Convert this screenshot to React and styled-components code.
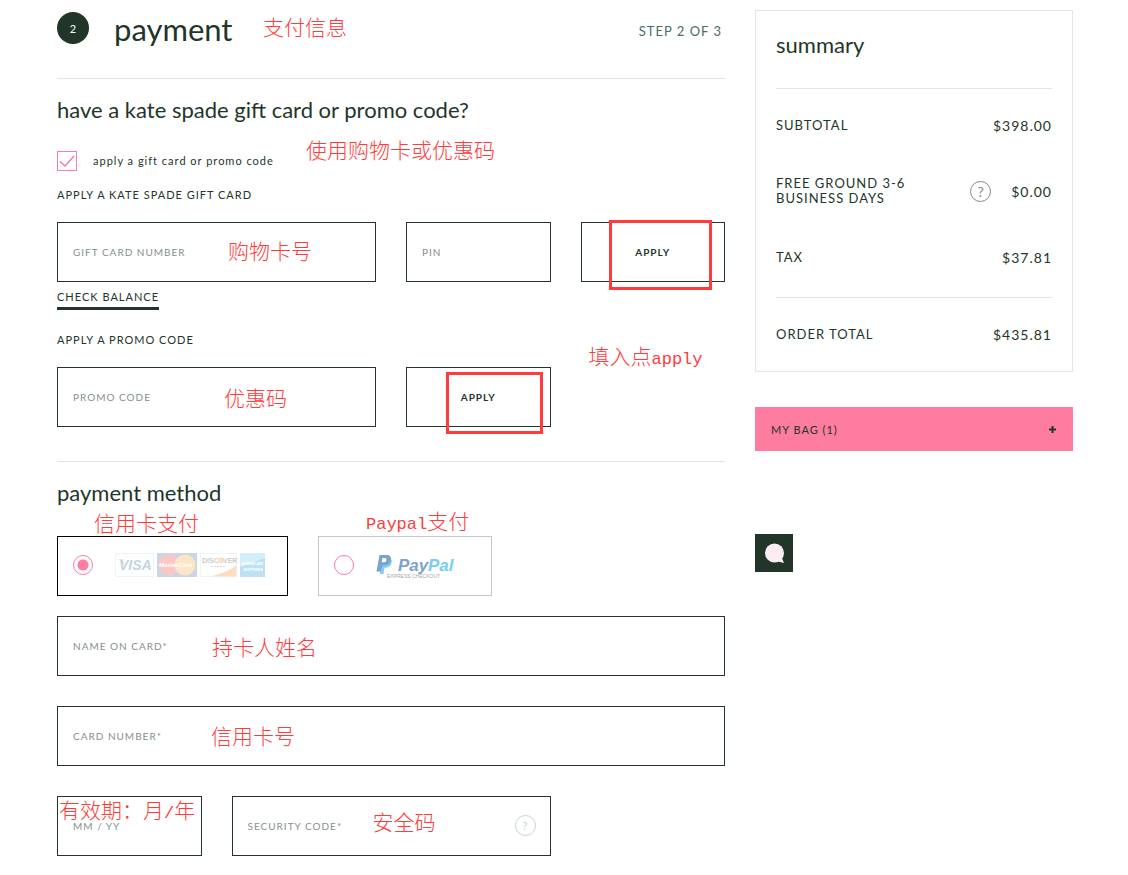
import { useState } from "react";
import styled, { createGlobalStyle } from "styled-components";

const dark = "#213629";
const pink = "#fd7c9f";
const line = "#dfe7e5";
const noteRed = "#ff3b3b";

const GlobalStyle = createGlobalStyle`
  * {
    box-sizing: border-box;
  }
  body {
    margin: 0;
    background-color: #ffffff;
    color: ${dark};
    font-family: Lato, "Noto Sans CJK SC", sans-serif;
  }
  h1, h2, h3, p, dl, dt, dd {
    margin: 0;
    font-weight: 400;
  }
  button, input {
    font-family: inherit;
    color: inherit;
  }
`;

const Page = styled.div`
  display: grid;
  grid-template-columns: 668fr 318fr;
  column-gap: 30px;
  align-items: start;
  padding: 10px 55px 19px 57px;
`;

const Main = styled.main`
  min-width: 0;
`;

const Side = styled.aside`
  min-width: 0;
`;

const Header = styled.header`
  position: relative;
  display: flex;
  align-items: flex-start;
  height: 69px;
  padding-top: 2px;
  border-bottom: 1px solid ${line};
`;

const StepNumber = styled.span`
  display: flex;
  align-items: center;
  justify-content: center;
  width: 32px;
  height: 32px;
  border-radius: 50%;
  background-color: ${dark};
  color: #ffffff;
  font-size: 11px;
`;

const Title = styled.h1`
  flex: 1;
  margin-left: 25px;
  font-size: 31px;
  line-height: 34px;
`;

const StepText = styled.p`
  padding-right: 3px;
  font-size: 13px;
  line-height: 38px;
  letter-spacing: 1px;
  color: #4a6b64;
`;

const Section = styled.section`
  position: relative;
  padding: 16px 0 ${(props) => (props.$last ? "0" : "34px")};
  border-bottom: ${(props) => (props.$last ? "0" : `1px solid ${line}`)};
`;

const Heading = styled.h2`
  font-size: 22px;
  line-height: 30px;
  white-space: nowrap;
`;

const CheckRow = styled.label`
  display: flex;
  align-items: center;
  gap: 16px;
  margin: 26px 0 14px;
  font-size: 11px;
  line-height: 20px;
  letter-spacing: 1px;
`;

const CheckWrap = styled.span`
  display: grid;
  > * {
    grid-area: 1 / 1;
  }
  svg {
    pointer-events: none;
  }
`;

const Checkbox = styled.input`
  appearance: none;
  width: 20px;
  height: 20px;
  margin: 0;
  border: 1px solid ${pink};
`;

const GroupLabel = styled.h3`
  margin-bottom: 17px;
  font-size: 11px;
  line-height: 20px;
  letter-spacing: 1px;
`;

const Row = styled.div`
  display: grid;
  grid-template-columns: repeat(4, 1fr);
  column-gap: 30px;
  margin-top: ${(props) => props.$top || 0}px;
`;

const Cell = styled.div`
  position: relative;
  grid-column: span ${(props) => props.$span || 1};
`;

const Input = styled.input`
  display: block;
  width: 100%;
  height: 60px;
  padding: 0 15px;
  border: 1px solid ${dark};
  border-radius: 0;
  background-color: transparent;
  font-size: 10px;
  letter-spacing: 1px;
  &::placeholder {
    color: #85908a;
    opacity: 1;
  }
`;

const ApplyButton = styled.button`
  width: 100%;
  height: 60px;
  border: 1px solid ${dark};
  background-color: #ffffff;
  font-size: 10px;
  font-weight: 700;
  letter-spacing: 1px;
  cursor: pointer;
`;

const BalanceLink = styled.a`
  display: inline-block;
  margin: 5px 0 20px;
  border-bottom: 3px solid ${dark};
  color: ${dark};
  font-size: 11px;
  line-height: 20px;
  letter-spacing: 1px;
  text-decoration: none;
  vertical-align: top;
`;

const Options = styled.div`
  display: flex;
  gap: 30px;
  margin: 28px 0 20px;
`;

const Option = styled.label`
  display: flex;
  align-items: center;
  gap: 22px;
  height: 60px;
  padding: 0 22px 2px 15px;
  border: 1px solid ${(props) => (props.$active ? "#000000" : "#c4c7c5")};
`;

const Radio = styled.input`
  appearance: none;
  width: 20px;
  height: 20px;
  margin: 0;
  border: 1px solid ${pink};
  border-radius: 50%;
  &:checked {
    background: radial-gradient(circle, ${pink} 5px, #ffffff 6px);
  }
`;

const Help = styled.button`
  display: flex;
  flex-shrink: 0;
  align-items: center;
  justify-content: center;
  width: 21px;
  height: 21px;
  padding: 0;
  border: 1px solid currentColor;
  border-radius: 50%;
  background-color: transparent;
  color: ${(props) => (props.$pale ? "#c3d6d0" : "#858585")};
  font-size: ${(props) => (props.$pale ? 11 : 14)}px;
`;

const FieldHelp = styled.span`
  position: absolute;
  top: 19px;
  right: 15px;
`;

const Summary = styled.section`
  padding: 0 20px;
  border: 1px solid ${line};
`;

const SummaryTitle = styled.h2`
  height: 78px;
  border-bottom: 1px solid ${line};
  font-size: 22px;
  line-height: 68px;
`;

const Lines = styled.dl`
  padding: 3px 0 7px;
  border-bottom: 1px solid ${line};
`;

const SummaryLine = styled.div`
  display: flex;
  align-items: center;
  gap: 20px;
  height: ${(props) => (props.$total ? 73 : 66)}px;
  font-size: 14px;
  line-height: 15px;
  letter-spacing: 1px;
  dt {
    flex: 1;
    font-size: 13px;
  }
`;

const LineName = styled.span`
  display: block;
  max-width: 150px;
`;

const Bag = styled.button`
  display: flex;
  align-items: center;
  justify-content: space-between;
  width: 100%;
  height: 44px;
  margin-top: 35px;
  padding: 0 16px;
  border: 0;
  background-color: ${pink};
  font-size: 11px;
  letter-spacing: 1px;
  cursor: pointer;
`;

const Chat = styled.button`
  display: block;
  width: 38px;
  height: 38px;
  margin-top: 83px;
  padding: 0;
  border: 0;
  background-color: ${dark};
  cursor: pointer;
`;

// red notes laid over the form
const Note = styled.span`
  position: absolute;
  left: ${(props) => props.$x}px;
  top: ${(props) => props.$y}px;
  z-index: 1;
  color: ${noteRed};
  font-family: "Noto Sans CJK SC", sans-serif;
  font-size: 21px;
  font-weight: 300;
  line-height: 22px;
  white-space: nowrap;
  pointer-events: none;
`;

const NoteLatin = styled.span`
  font-family: "Liberation Mono", monospace;
  font-size: 17px;
`;

const Mark = styled.span`
  position: absolute;
  left: ${(props) => props.$x}px;
  top: ${(props) => props.$y}px;
  width: ${(props) => props.$w}px;
  height: ${(props) => props.$h}px;
  border: 3px solid ${noteRed};
  pointer-events: none;
`;

const Cards = () => (
  <svg width="150" height="24" viewBox="0 0 150 24" opacity="0.28" aria-hidden="true">
    <g fontFamily="Liberation Sans" fontWeight="700">
      <rect x="0.5" y="0.5" width="38" height="23" fill="#fbfdfe" stroke="#c9dce6" />
      <path d="M3 6h5l2 7z" fill="#e6a54c" />
      <text x="4" y="17" fontSize="14" fontStyle="italic" fill="#2b66a0">VISA</text>

      <rect x="42" width="40" height="24" fill="#3f6fa8" />
      <circle cx="54" cy="12" r="10.500" fill="#ee3a3a" />
      <circle cx="70" cy="12" r="10.500" fill="#f9a53c" />
      <text x="44" y="14" fontSize="6" fontStyle="italic" fill="#ffffff">MasterCard</text>

      <rect x="85.500" y="0.5" width="36" height="23" fill="#ffffff" stroke="#c9dce6" />
      <path d="M95 23.500C106 21 116 17 121.500 12V23.500z" fill="#f28a2a" />
      <text x="87" y="10" fontSize="7" fill="#444444">DISC</text>
      <circle cx="106" cy="7.500" r="3" fill="#f29a4a" />
      <text x="108" y="10" fontSize="7" fill="#444444">VER</text>
      <path d="M96 13.500h15" stroke="#777777" strokeDasharray="2 1" />

      <rect x="125" width="25" height="24" fill="#1a9ad6" />
      <path d="M125 0h25v5l-25 9z" fill="#62c3e8" />
      <text x="126" y="12" fontSize="4" fill="#ffffff">AMERICAN</text>
      <text x="129" y="18" fontSize="4" fill="#ffffff">EXPRESS</text>
    </g>
  </svg>
);

const PayPal = () => (
  <svg width="93" height="28" viewBox="0 0 93 28" aria-hidden="true">
    <path d="M6 6h6.500c3 1 3.800 3.500 3 6-.8 3.500-3.500 4.800-6.500 4.800H8.500L7.500 23H3.800z" fill="#85cdf0" />
    <path d="M3.500 4h7c3.500 0 5 2 4.300 5.200-.8 3.600-3.200 5-6.500 5H6L4.900 20.500H.5z" fill="#7ba3cb" />
    <path d="M6.500 7l-.8 4.300h1.800c1.600 0 2.600-.7 2.900-2.300.2-1.400-.6-2-2-2z" fill="#ffffff" />
    <g fontFamily="Liberation Sans" fontWeight="700" fontStyle="italic" fontSize="17">
      <text x="22" y="20" fill="#7ba3cb">Pay</text>
      <text x="52" y="20" fill="#78cdf3">Pal</text>
    </g>
    <text x="11" y="27" fontFamily="Liberation Sans" fontSize="5" fill="#a5a9ab">EXPRESS CHECKOUT</text>
  </svg>
);

const Field = ({ label, span, children, ...rest }) => (
  <Cell $span={span}>
    <Input type="text" placeholder={label} aria-label={label} {...rest} />
    {children}
  </Cell>
);

const App = () => {
  const [useCode, setUseCode] = useState(true);
  const [method, setMethod] = useState("card");

  return (
    <>
      <GlobalStyle />
      <Page>
        <Main>
          <Header>
            <StepNumber>2</StepNumber>
            <Title>payment</Title>
            <StepText>STEP 2 OF 3</StepText>
            <Note $x={206} $y={5}>支付信息</Note>
          </Header>

          <Section>
            <Heading>have a kate spade gift card or promo code?</Heading>
            <CheckRow>
              <CheckWrap>
                <Checkbox
                  type="checkbox"
                  checked={useCode}
                  onChange={(e) => setUseCode(e.target.checked)}
                />
                {useCode && (
                  <svg width="20" height="20" viewBox="0 0 20 20" fill="none" stroke={pink} strokeWidth="1.500">
                    <path d="M3 10.500l5 4.500L17 5" />
                  </svg>
                )}
              </CheckWrap>
              apply a gift card or promo code
            </CheckRow>
            <Note $x={249} $y={59}>使用购物卡或优惠码</Note>

            <GroupLabel>APPLY A KATE SPADE GIFT CARD</GroupLabel>
            <Row>
              <Field label="GIFT CARD NUMBER" span={2}>
                <Note $x={171} $y={17}>购物卡号</Note>
              </Field>
              <Field label="PIN" />
              <Cell>
                <ApplyButton type="button">APPLY</ApplyButton>
                <Mark $x={28} $y={-2} $w={103} $h={70} />
              </Cell>
            </Row>
            <BalanceLink href="#balance">CHECK BALANCE</BalanceLink>

            <GroupLabel>APPLY A PROMO CODE</GroupLabel>
            <Row>
              <Field label="PROMO CODE" span={2}>
                <Note $x={167} $y={19}>优惠码</Note>
              </Field>
              <Cell>
                <ApplyButton type="button">APPLY</ApplyButton>
                <Mark $x={40} $y={5} $w={97} $h={62} />
              </Cell>
              <Cell>
                <Note $x={8} $y={-23}>
                  填入点<NoteLatin>apply</NoteLatin>
                </Note>
              </Cell>
            </Row>
          </Section>

          <Section $last>
            <Heading>payment method</Heading>
            <Note $x={37} $y={49}>信用卡支付</Note>
            <Note $x={309} $y={47}>
              <NoteLatin>Paypal</NoteLatin>支付
            </Note>
            <Options>
              <Option $active={method === "card"}>
                <Radio
                  type="radio"
                  name="method"
                  aria-label="Credit card"
                  checked={method === "card"}
                  onChange={() => setMethod("card")}
                />
                <Cards />
              </Option>
              <Option $active={method === "paypal"}>
                <Radio
                  type="radio"
                  name="method"
                  aria-label="PayPal"
                  checked={method === "paypal"}
                  onChange={() => setMethod("paypal")}
                />
                <PayPal />
              </Option>
            </Options>
            <Row>
              <Field label="NAME ON CARD*" span={4}>
                <Note $x={155} $y={19}>持卡人姓名</Note>
              </Field>
            </Row>
            <Row $top={30}>
              <Field label="CARD NUMBER*" span={4}>
                <Note $x={154} $y={18}>信用卡号</Note>
              </Field>
            </Row>
            <Row $top={30}>
              <Field label="MM / YY">
                <Note $x={2} $y={2}>
                  有效期：月<NoteLatin>/</NoteLatin>年
                </Note>
              </Field>
              <Field label="SECURITY CODE*" span={2}>
                <Note $x={141} $y={14}>安全码</Note>
                <FieldHelp>
                  <Help type="button" $pale>?</Help>
                </FieldHelp>
              </Field>
            </Row>
          </Section>
        </Main>

        <Side>
          <Summary>
            <SummaryTitle>summary</SummaryTitle>
            <Lines>
              <SummaryLine>
                <dt>SUBTOTAL</dt>
                <dd>$398.00</dd>
              </SummaryLine>
              <SummaryLine>
                <dt>
                  <LineName>FREE GROUND 3-6 BUSINESS DAYS</LineName>
                </dt>
                <Help type="button">?</Help>
                <dd>$0.00</dd>
              </SummaryLine>
              <SummaryLine>
                <dt>TAX</dt>
                <dd>$37.81</dd>
              </SummaryLine>
            </Lines>
            <dl>
              <SummaryLine $total>
                <dt>ORDER TOTAL</dt>
                <dd>$435.81</dd>
              </SummaryLine>
            </dl>
          </Summary>
          <Bag type="button">
            <span>MY BAG (1)</span>
            <svg width="9" height="9" viewBox="0 0 9 9" stroke={dark} strokeWidth="2">
              <path d="M4.500 1v7M1 4.500h7" />
            </svg>
          </Bag>
          <Chat type="button" aria-label="Chat">
            <svg width="38" height="38" viewBox="0 0 38 38" fill="#fbeef3">
              <circle cx="19.500" cy="19" r="9.500" />
              <path d="M21 27l8 2-2.500-6z" />
            </svg>
          </Chat>
        </Side>
      </Page>
    </>
  );
};

export default App;
